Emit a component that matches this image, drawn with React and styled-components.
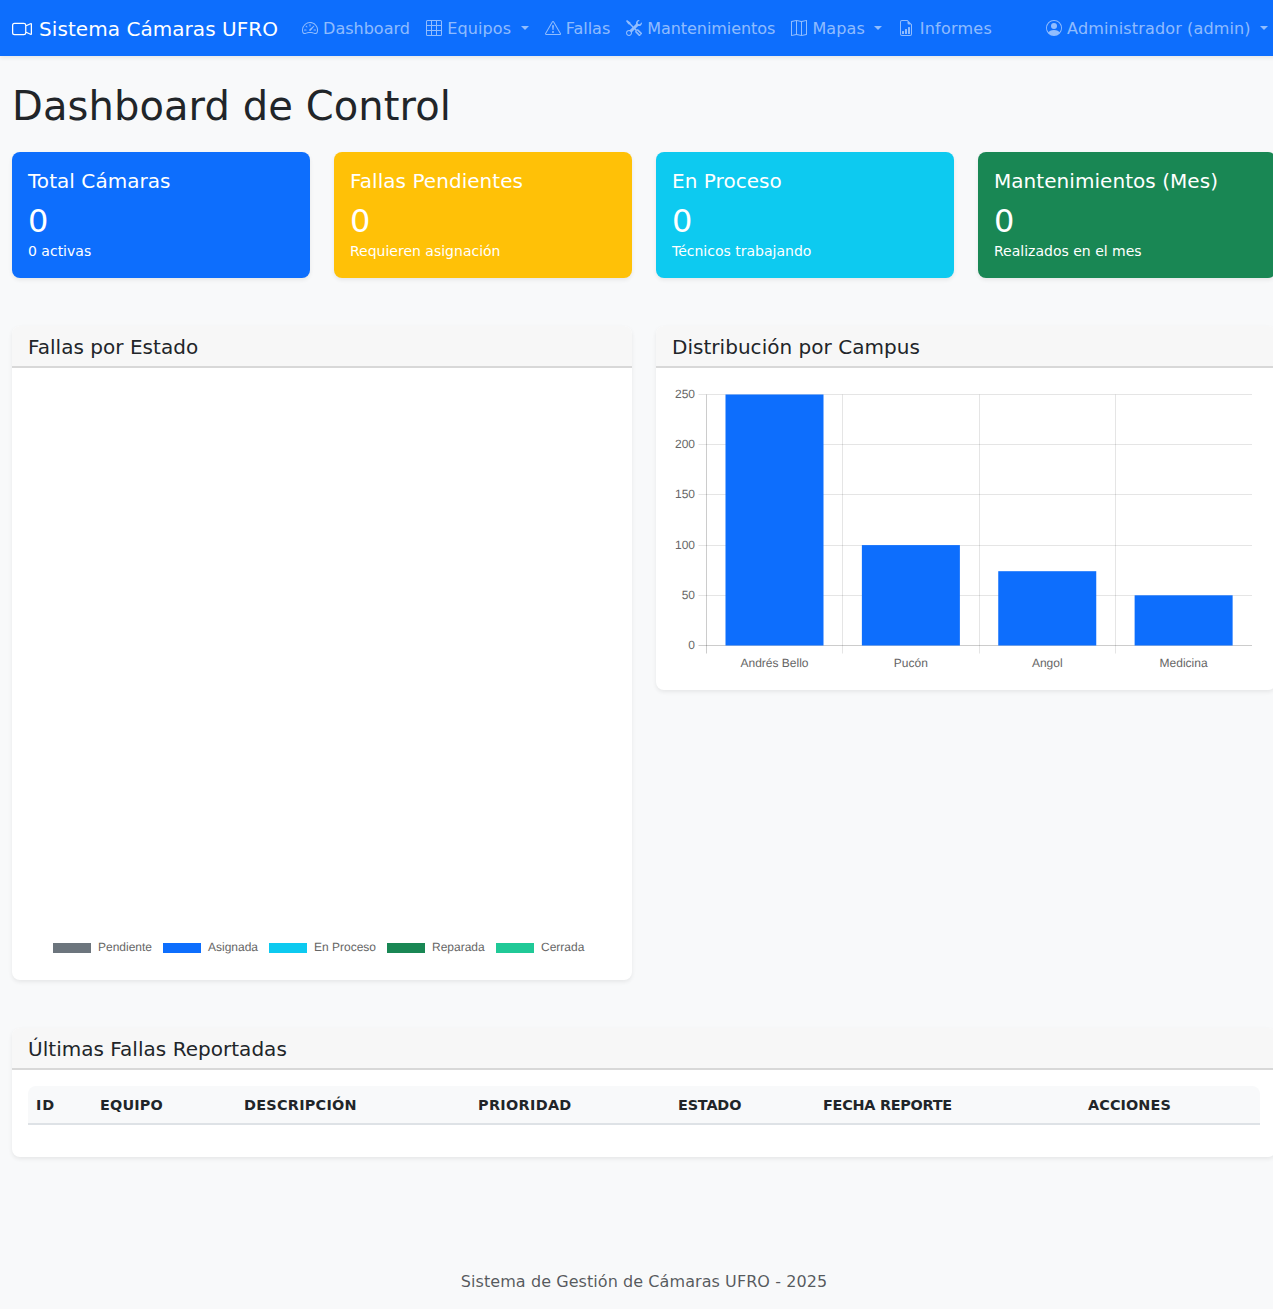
import styled, { createGlobalStyle } from 'styled-components';
import {
  BsCameraVideo,
  BsSpeedometer2,
  BsGrid3X3,
  BsExclamationTriangle,
  BsTools,
  BsMap,
  BsFileEarmarkBarGraph,
  BsPersonCircle,
} from 'react-icons/bs';

const NAV_LINKS = [
  { label: 'Dashboard', icon: BsSpeedometer2 },
  { label: 'Equipos', icon: BsGrid3X3, dropdown: true, track: 0.14 },
  { label: 'Fallas', icon: BsExclamationTriangle },
  { label: 'Mantenimientos', icon: BsTools, track: -0.07 },
  { label: 'Mapas', icon: BsMap, dropdown: true, track: 0.14 },
  { label: 'Informes', icon: BsFileEarmarkBarGraph, track: 0.25 },
];

const STATS = [
  { title: 'Total Cámaras', value: 0, note: '0 activas', color: '#0d6efd' },
  { title: 'Fallas Pendientes', value: 0, note: 'Requieren asignación', color: '#ffc107' },
  { title: 'En Proceso', value: 0, note: 'Técnicos trabajando', color: '#0dcaf0' },
  { title: 'Mantenimientos (Mes)', value: 0, note: 'Realizados en el mes', color: '#198754' },
];

const LEGEND = [
  { label: 'Pendiente', color: '#6c757d', x: 25 },
  { label: 'Asignada', color: '#0d6efd', x: 135 },
  { label: 'En Proceso', color: '#0dcaf0', x: 241 },
  { label: 'Reparada', color: '#198754', x: 359 },
  { label: 'Cerrada', color: '#20c997', x: 468 },
];

const CAMPUS = [
  { label: 'Andrés Bello', value: 250 },
  { label: 'Pucón', value: 100 },
  { label: 'Angol', value: 74 },
  { label: 'Medicina', value: 50 },
];

const COLUMNS = [
  { label: 'ID', width: 64, track: 0.9 },
  { label: 'Equipo', width: 144, track: 0.17 },
  { label: 'Descripción', width: 234, track: 0.27 },
  { label: 'Prioridad', width: 200, track: 0.33 },
  { label: 'Estado', width: 145, track: -0.17 },
  { label: 'Fecha Reporte', width: 265, track: -0.25 },
  { label: 'Acciones', width: 180, track: 0.1 },
];

const PLOT = { left: 34.5, right: 580, top: 10.5, bottom: 261.5 };
const Y_TICKS = [250, 200, 150, 100, 50, 0];

const yFor = (value) => PLOT.bottom - (value / 250) * (PLOT.bottom - PLOT.top);
const gridY = (value) => Math.round(yFor(value) - 0.5) + 0.5;
const stepX = (PLOT.right - PLOT.left) / CAMPUS.length;

const GlobalStyle = createGlobalStyle`
  html {
    overflow-x: hidden;
  }
  body {
    margin: 0;
    background: #f8f9fa;
    color: #212529;
    font-family: "DejaVu Sans", sans-serif;
    font-size: 16px;
    line-height: 1.5;
  }
`;

const Page = styled.div`
  width: 1288px;
`;

const Navbar = styled.nav`
  display: flex;
  align-items: center;
  height: 56px;
  box-sizing: border-box;
  padding: 0 12px;
  background: #0d6efd;
  box-shadow: 0 2px 4px rgba(0, 0, 0, 0.075);
`;

const Brand = styled.a`
  display: block;
  margin-right: 16px;
  padding-top: 2px;
  color: #fff;
  font-size: 20px;
  line-height: 30px;
  letter-spacing: 0.05px;
  white-space: nowrap;
  svg {
    margin-right: 0.7px;
    vertical-align: -0.125em;
  }
`;

const NavList = styled.div`
  display: flex;
  margin-left: ${(p) => (p.$end ? 'auto' : '0')};
`;

const NavLink = styled.a`
  display: block;
  padding: 9px 8px 7px;
  color: rgba(255, 255, 255, 0.55);
  letter-spacing: ${(p) => p.$track || 0}px;
  white-space: nowrap;
  svg {
    vertical-align: -0.125em;
  }
  ${(p) =>
    p.$dropdown &&
    `
    &::after {
      content: '';
      display: inline-block;
      margin-left: 4.08px;
      vertical-align: 4.08px;
      border-top: 4.8px solid;
      border-right: 4.8px solid transparent;
      border-left: 4.8px solid transparent;
    }
  `}
`;

const Main = styled.main`
  padding: 24px 12px 0;
`;

const PageTitle = styled.h1`
  margin: 0 0 22px;
  padding-top: 2px;
  font-size: 40px;
  font-weight: 500;
  line-height: 1.2;
  letter-spacing: 0.1px;
`;

const StatGrid = styled.div`
  display: grid;
  grid-template-columns: repeat(4, 1fr);
  gap: 24px;
  margin-bottom: 48px;
`;

const StatCard = styled.div`
  padding: 17px 16px 15px;
  border-radius: 8px;
  background: ${(p) => p.$color};
  color: #fff;
  box-shadow: 0 2px 4px rgba(0, 0, 0, 0.075);
`;

const StatTitle = styled.h5`
  margin: 0 0 9px;
  font-size: 20px;
  font-weight: 500;
  line-height: 1.2;
  letter-spacing: 0.05px;
`;

const StatValue = styled.h2`
  margin: 0 0 -1px;
  font-size: 32px;
  font-weight: 500;
  line-height: 1.2;
`;

const StatNote = styled.p`
  margin: 0;
  small {
    font-size: 14px;
  }
`;

const ChartGrid = styled.div`
  display: grid;
  grid-template-columns: repeat(2, 1fr);
  align-items: start;
  gap: 24px;
  margin-bottom: 48px;
`;

const Card = styled.section`
  overflow: hidden;
  border-radius: 8px;
  background: #fff;
  box-shadow: 0 2px 4px rgba(0, 0, 0, 0.075);
`;

const CardHeader = styled.header`
  padding: 9px 16px 7px;
  border-bottom: 2px solid rgba(0, 0, 0, 0.125);
  background: #f7f7f7;
`;

const CardTitle = styled.h5`
  margin: 0;
  font-size: 20px;
  font-weight: 500;
  line-height: 1.2;
  letter-spacing: 0.03px;
`;

const CardBody = styled.div`
  padding: 16px;
`;

const ChartSvg = styled.svg`
  display: block;
  width: 100%;
  height: ${(p) => p.$height}px;
  text {
    fill: #666;
    font-family: "Liberation Sans", Arial, sans-serif;
    font-size: 12px;
    text-rendering: geometricPrecision;
  }
`;

const TableWrap = styled.div`
  overflow: hidden;
  margin-bottom: 16px;
  border-radius: 8px 8px 0 0;
`;

const Table = styled.table`
  width: 100%;
  border-collapse: collapse;
  table-layout: fixed;
`;

const HeadCell = styled.th`
  width: ${(p) => p.$width}px;
  box-sizing: border-box;
  padding: 9px 8px 7px;
  border-bottom: 2px solid #dee2e6;
  background: #f8f9fa;
  font-size: 14.4px;
  line-height: 21px;
  font-weight: 700;
  letter-spacing: ${(p) => p.$track}px;
  text-align: left;
  text-transform: uppercase;
  white-space: nowrap;
`;

const Footer = styled.footer`
  margin-top: 96px;
  padding: 17px 0 15px;
  color: rgba(33, 37, 41, 0.75);
  letter-spacing: 0.07px;
  text-align: center;
`;

const StatusChart = () => (
  <ChartSvg $height={580} viewBox="0 0 588 580">
    {LEGEND.map((item) => (
      <g key={item.label}>
        <rect x={item.x} y={559} width={38} height={10} fill={item.color} />
        <text x={item.x + 45} y={567}>
          {item.label}
        </text>
      </g>
    ))}
  </ChartSvg>
);

const CampusChart = () => (
  <ChartSvg $height={290} viewBox="0 0 588 290">
    {Y_TICKS.map((tick) => (
      <g key={tick}>
        <line
          x1={PLOT.left - 8}
          x2={PLOT.right}
          y1={gridY(tick)}
          y2={gridY(tick)}
          stroke={tick === 0 ? 'rgba(0,0,0,0.2)' : 'rgba(0,0,0,0.1)'}
        />
        <text x={23} y={gridY(tick) + 3.5} textAnchor="end">
          {tick}
        </text>
      </g>
    ))}
    {[0, 1, 2, 3].map((i) => (
      <line
        key={i}
        x1={PLOT.left + Math.round(i * stepX)}
        x2={PLOT.left + Math.round(i * stepX)}
        y1={PLOT.top}
        y2={PLOT.bottom + 8}
        stroke={i === 0 ? 'rgba(0,0,0,0.2)' : 'rgba(0,0,0,0.1)'}
      />
    ))}
    {CAMPUS.map((item, i) => (
      <g key={item.label}>
        <rect
          x={PLOT.left + i * stepX + 19}
          y={yFor(item.value)}
          width={98}
          height={PLOT.bottom - yFor(item.value)}
          fill="#0d6efd"
        />
        <text x={PLOT.left + (i + 0.5) * stepX - 0.2} y={283} textAnchor="middle">
          {item.label}
        </text>
      </g>
    ))}
  </ChartSvg>
);

const NavItem = ({ icon: Icon, label, dropdown, track }) => (
  <NavLink $dropdown={dropdown} $track={track}>
    <Icon size={16} /> {label}{' '}
  </NavLink>
);

const App = () => (
  <Page>
    <GlobalStyle />
    <Navbar>
      <Brand>
        <BsCameraVideo size={20} /> Sistema Cámaras UFRO
      </Brand>
      <NavList>
        {NAV_LINKS.map((link) => (
          <NavItem key={link.label} {...link} />
        ))}
      </NavList>
      <NavList $end>
        <NavItem icon={BsPersonCircle} label="Administrador (admin)" dropdown track={0.14} />
      </NavList>
    </Navbar>

    <Main>
      <PageTitle>Dashboard de Control</PageTitle>

      <StatGrid>
        {STATS.map((stat) => (
          <StatCard key={stat.title} $color={stat.color}>
            <StatTitle>{stat.title}</StatTitle>
            <StatValue>{stat.value}</StatValue>
            <StatNote>
              <small>{stat.note}</small>
            </StatNote>
          </StatCard>
        ))}
      </StatGrid>

      <ChartGrid>
        <Card>
          <CardHeader>
            <CardTitle>Fallas por Estado</CardTitle>
          </CardHeader>
          <CardBody>
            <StatusChart />
          </CardBody>
        </Card>
        <Card>
          <CardHeader>
            <CardTitle>Distribución por Campus</CardTitle>
          </CardHeader>
          <CardBody>
            <CampusChart />
          </CardBody>
        </Card>
      </ChartGrid>

      <Card>
        <CardHeader>
          <CardTitle>Últimas Fallas Reportadas</CardTitle>
        </CardHeader>
        <CardBody>
          <TableWrap>
            <Table>
              <thead>
                <tr>
                  {COLUMNS.map((col) => (
                    <HeadCell key={col.label} $width={col.width} $track={col.track}>
                      {col.label}
                    </HeadCell>
                  ))}
                </tr>
              </thead>
              <tbody />
            </Table>
          </TableWrap>
        </CardBody>
      </Card>

      <Footer>Sistema de Gestión de Cámaras UFRO - 2025</Footer>
    </Main>
  </Page>
);

export default App;
